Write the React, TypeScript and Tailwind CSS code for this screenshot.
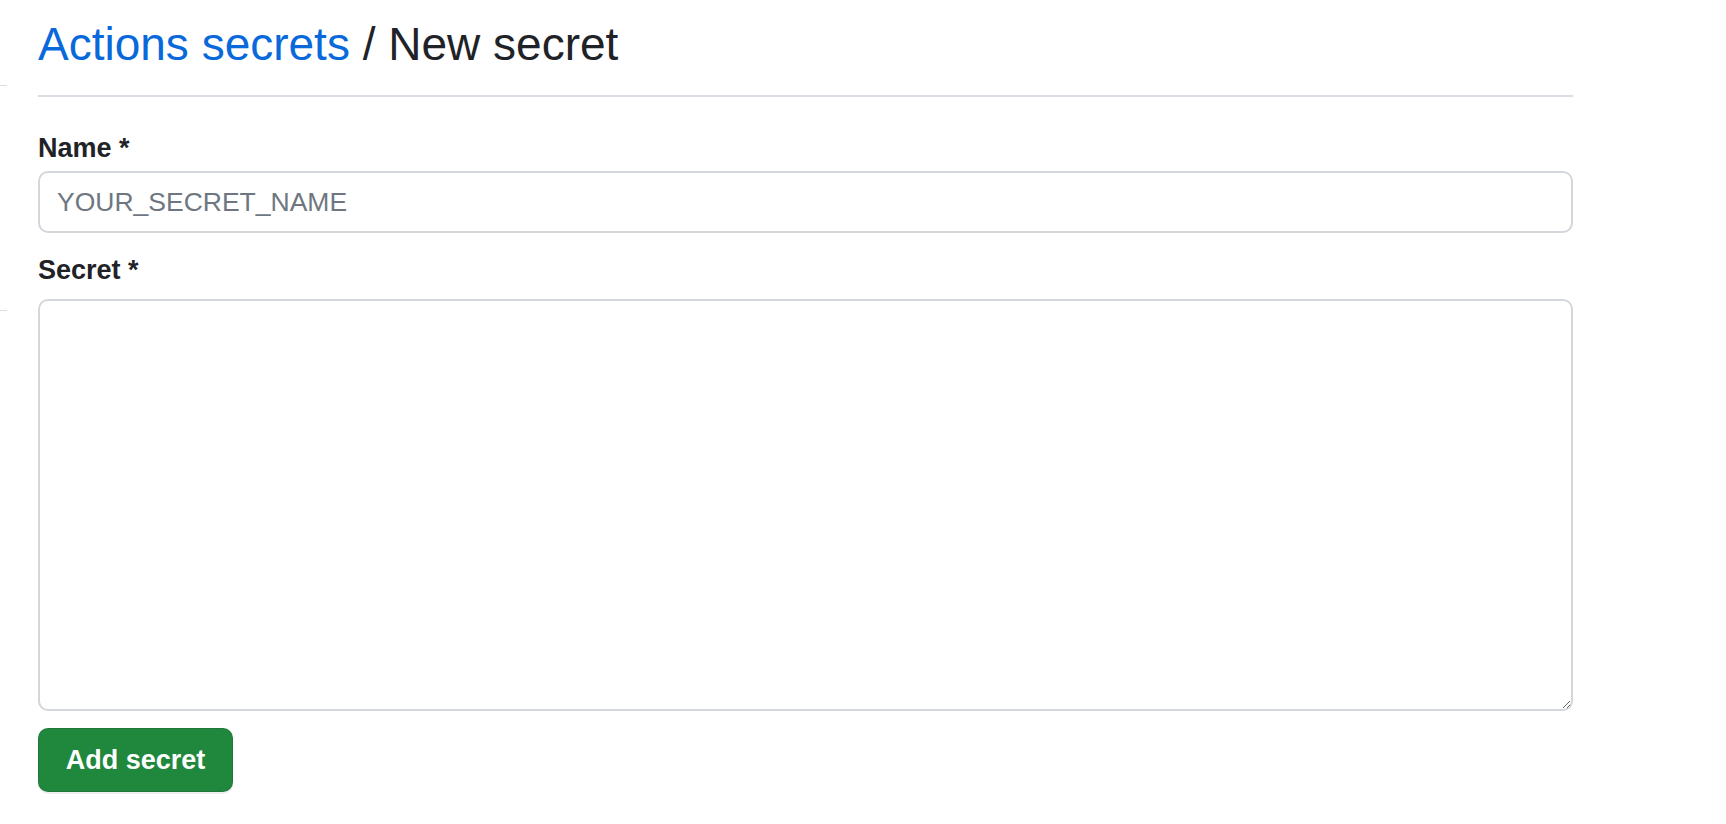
import { useState } from "react";

const font = { fontFamily: '"Liberation Sans", Arial, sans-serif' };

interface FieldLabelProps {
    text: string;
    htmlFor: string;
    className?: string;
}

function FieldLabel({ text, htmlFor, className }: FieldLabelProps) {
    return(
        <label htmlFor={htmlFor} className={`block text-[27px] leading-[36px] font-bold text-[#1f2328] ${className ?? ""}`}>
            {text}
        </label>
    )
}

export default function App() {
    const [name, setName] = useState("");
    const [secret, setSecret] = useState("");

    return(
        <div className="min-h-screen bg-white flex" style={font}>
            {/* edge of the sidebar that peeks in on the left */}
            <div className="w-[38px] shrink-0 flex flex-col">
                <div className="mt-[85px] h-px w-[7px] bg-[#d8dee4]"></div>
                <div className="mt-[224px] h-px w-[7px] bg-[#d8dee4]"></div>
            </div>

            <div className="w-[1535px]">
                <div className="pt-[15px] pb-[22px] border-b-2 border-[#d8dee4]">
                    <h2 className="text-[46px] leading-[58px] font-normal text-[#1f2328] whitespace-nowrap">
                        <a href="#" className="text-[#0969da]">Actions secrets</a> / New secret
                    </h2>
                </div>

                <form className="flex flex-col" onSubmit={(e) => e.preventDefault()}>
                    <FieldLabel text="Name *" htmlFor="secret_name" className="mt-[33px] mb-[5px]" />
                    <input
                        id="secret_name"
                        type="text"
                        value={name}
                        onChange={(e) => setName(e.target.value)}
                        placeholder="YOUR_SECRET_NAME"
                        className="h-[62px] w-full rounded-[10px] border-2 border-[#d3d7db] bg-white px-[17px] text-[26.5px] text-[#1f2328] placeholder:text-[#6e7781] outline-none"
                    />

                    <FieldLabel text="Secret *" htmlFor="secret_value" className="mt-[19px] mb-[11px]" />
                    <textarea
                        id="secret_value"
                        value={secret}
                        onChange={(e) => setSecret(e.target.value)}
                        className="h-[412px] w-full rounded-[10px] border-2 border-[#d3d7db] bg-white px-[17px] py-[12px] text-[26.5px] text-[#1f2328] outline-none"
                    />

                    <div className="mt-[17px]">
                        <button
                            type="submit"
                            className="h-[64px] w-[195px] rounded-[10px] border border-[rgba(31,35,40,0.15)] bg-[#1f883d] text-[27px] font-bold text-white shadow-[0_2px_0_rgba(31,35,40,0.08)]"
                        >
                            Add secret
                        </button>
                    </div>
                </form>
            </div>
        </div>
    )
}
